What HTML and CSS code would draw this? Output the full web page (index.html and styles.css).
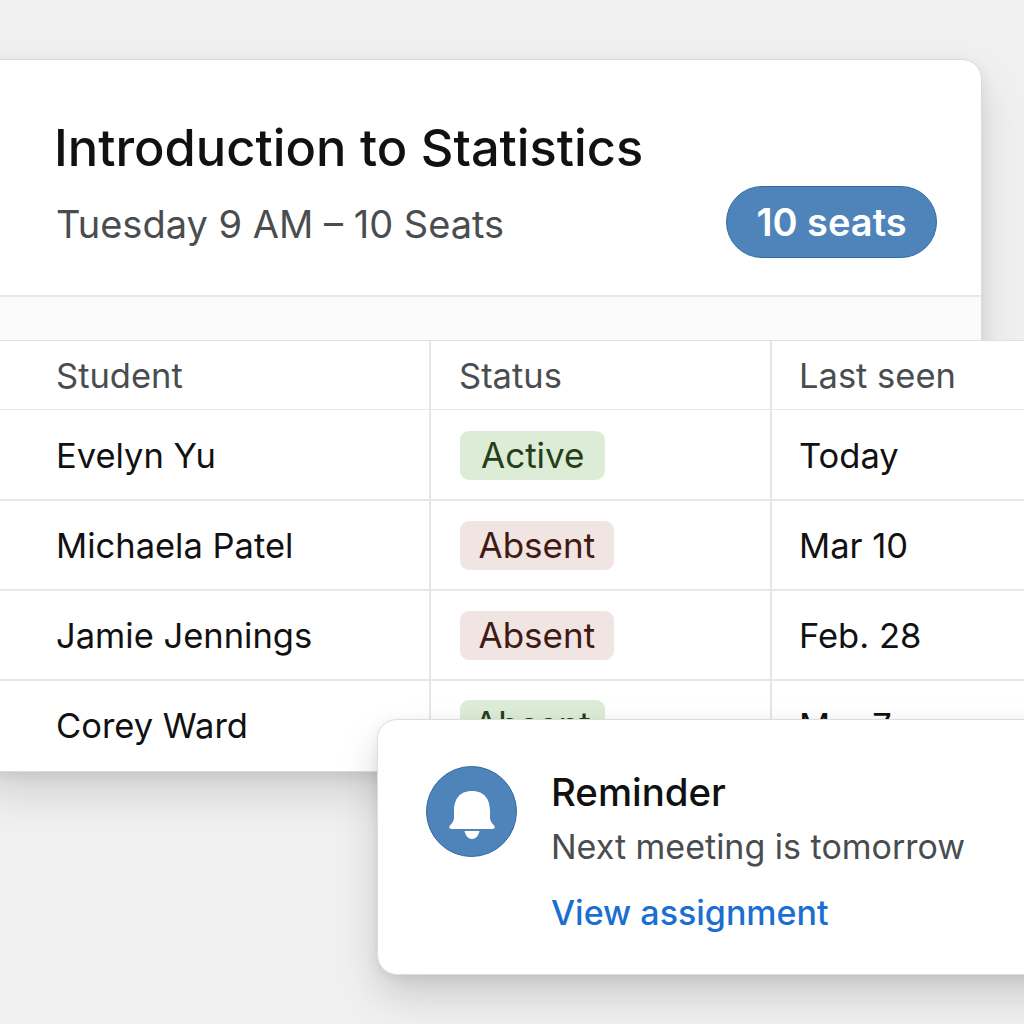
FILE: index.html
```html
<!DOCTYPE html>
<html lang="en">
<head>
<meta charset="utf-8">
<title>Introduction to Statistics</title>
<link rel="stylesheet" href="styles.css">
</head>
<body>
<main class="stage">
  <section class="card">
    <header class="card-head">
      <div class="head-text">
        <h1 class="title">Introduction to Statistics</h1>
        <p class="subtitle">Tuesday 9 AM – 10 Seats</p>
      </div>
      <span class="seats">10 seats</span>
    </header>
    <div class="band"></div>
    <div class="table">
      <div class="cell hcell first">Student</div>
      <div class="cell hcell second">Status</div>
      <div class="cell hcell third">Last seen</div>

      <div class="cell first row-one">Evelyn Yu</div>
      <div class="cell second"><span class="pill pill-green pill-down">Active</span></div>
      <div class="cell third row-one">Today</div>

      <div class="cell first">Michaela Patel</div>
      <div class="cell second"><span class="pill pill-red">Absent</span></div>
      <div class="cell third">Mar 10</div>

      <div class="cell first">Jamie Jennings</div>
      <div class="cell second"><span class="pill pill-red">Absent</span></div>
      <div class="cell third">Feb. 28</div>

      <div class="cell first last">Corey Ward</div>
      <div class="cell second last"><span class="pill pill-green pill-tight">Absent</span></div>
      <div class="cell third last">Mar 7</div>
    </div>
  </section>

  <aside class="reminder">
    <div class="bell">
      <svg width="46" height="48" viewBox="0 0 46 48" aria-hidden="true">
        <path class="bell-body" d="M23 0C36 0 41 9 41 20V27C41 30 43 32 45 34.500C46.500 36.500 45.500 38 43.500 38H2.500C.5 38 -.5 36.500 1 34.500C3 32 5 30 5 27V20C5 9 10 0 23 0Z"/>
        <path class="bell-body" d="M15.500 40H30.500C29.500 45 26.500 48 23 48C19.500 48 16.500 45 15.500 40Z"/>
      </svg>
    </div>
    <div class="rem-text">
      <h2 class="rem-title">Reminder</h2>
      <p class="rem-sub">Next meeting is tomorrow</p>
      <a class="rem-link" href="#">View assignment</a>
    </div>
  </aside>
</main>
</body>
</html>
```

FILE: styles.css
```css
* { box-sizing: border-box; }
html, body { margin: 0; padding: 0; }
body {
  width: 1024px;
  height: 1024px;
  overflow: hidden;
  font-family: Inter, "Liberation Sans", sans-serif;
  background: #f0f0f0;
}
.stage {
  position: relative;
  width: 1024px;
  height: 1024px;
  overflow: hidden;
  padding-top: 59px;
  background: #f0f0f0;
}
.card {
  width: 1002px;
  margin-left: -20px;
  background: #fff;
  border-radius: 20px;
  border: 1px solid #dcdcdc;
  box-shadow: 0 22px 46px -4px rgba(0, 0, 0, 0.15), 0 4px 14px rgba(0, 0, 0, 0.07);
}
.card-head {
  height: 237px;
  padding: 0 44px 0 73px;
  display: flex;
  justify-content: space-between;
  align-items: flex-start;
  border-bottom: 2px solid #e8e8e8;
}
.head-text { padding-top: 58px; }
.title {
  margin: 0;
  font-size: 50.600px;
  line-height: 60px;
  font-weight: 500;
  color: #111;
}
.subtitle {
  margin: 23px 0 0 2px;
  font-size: 38px;
  line-height: 46px;
  font-weight: 400;
  color: #4a4d50;
}
.seats {
  margin-top: 126px;
  width: 211px;
  height: 72px;
  display: flex;
  align-items: center;
  justify-content: center;
  border-radius: 36px;
  background: #4e84b9;
  border: 1px solid #2f6ba8;
  color: #fff;
  font-size: 38px;
  font-weight: 600;
}
.band { height: 43px; background: #fbfbfb; }
.table {
  width: 1100px;
  display: grid;
  grid-template-columns: 450px 341px 309px;
  grid-template-rows: 69px 91px 90px 90px 90px;
  background: #fff;
  border-top: 1px solid #dfe1e3;
  border-radius: 0 0 0 20px;
}
.cell {
  display: flex;
  align-items: center;
  font-size: 34.500px;
  color: #111;
  border-bottom: 2px solid #e7e7e7;
  border-right: 2px solid #e4e6e8;
}
.hcell { color: #4a4d50; border-bottom-width: 1px; }
.first { padding-left: 75px; }
.second { padding-left: 28px; }
.third { padding-left: 27px; border-right: 0; }
.last { border-bottom: 0; padding-bottom: 2px; }
.row-one { padding-top: 2px; }
.pill {
  height: 49px;
  margin-left: 1px;
  display: flex;
  align-items: center;
  padding: 0 21px;
  border-radius: 9px;
  font-size: 35px;
}
.pill-green { background: #dcecd6; color: #263f18; }
.pill-red { background: #f0e5e2; color: #421a14; padding: 0 18.500px; }
.pill-down { margin-top: 1px; }
.pill-tight { padding: 0 14px; margin-top: -2px; }
.reminder {
  position: absolute;
  left: 377px;
  top: 719px;
  width: 720px;
  height: 256px;
  display: flex;
  gap: 34px;
  padding: 46px 0 0 48px;
  background: #fff;
  border: 1px solid #dedede;
  border-radius: 20px;
  box-shadow: 0 20px 40px -2px rgba(0, 0, 0, 0.17), 0 3px 12px rgba(0, 0, 0, 0.07);
}
.bell {
  width: 91px;
  height: 91px;
  flex: none;
  padding-top: 7px;
  border-radius: 50%;
  background: #4e84b9;
  border: 1px solid #2f6ba8;
  display: flex;
  align-items: center;
  justify-content: center;
}
.bell-body { fill: #fff; }
.rem-text { display: flex; flex-direction: column; align-items: flex-start; }
.rem-title {
  margin: 0;
  font-size: 38.400px;
  line-height: 52px;
  font-weight: 500;
  color: #111;
}
.rem-sub {
  margin: 3px 0 0;
  font-size: 34px;
  line-height: 52px;
  color: #4a4d50;
}
.rem-link {
  margin-top: 14px;
  font-size: 34px;
  line-height: 52px;
  font-weight: 500;
  color: #1a6fd0;
  text-decoration: none;
}
```
